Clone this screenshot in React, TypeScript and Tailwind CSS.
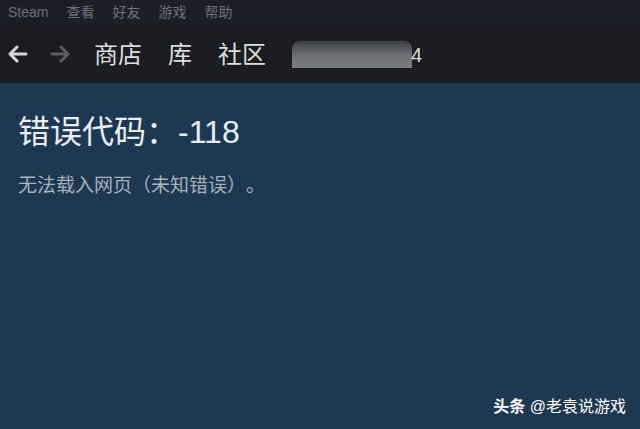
import React from "react";

const font = "font-['Liberation_Sans','Noto_Sans_CJK_SC',sans-serif]";

const BackArrow = ({ color }: { color: string }) => (
  <svg width="20" height="18" viewBox="0 0 20 18" fill="none" stroke={color} strokeWidth="3" strokeLinecap="round" strokeLinejoin="round">
    <path d="M18 9H3M9 2L2 9l7 7" />
  </svg>
);

const ForwardArrow = ({ color }: { color: string }) => (
  <svg width="20" height="18" viewBox="0 0 20 18" fill="none" stroke={color} strokeWidth="3" strokeLinecap="round" strokeLinejoin="round">
    <path d="M2 9h15M11 2l7 7-7 7" />
  </svg>
);

const App = () => {
  return (
    <div className={`w-[640px] h-[429px] flex flex-col bg-[#1d3850] ${font}`}>
      {/* menu bar */}
      <div className="h-[26px] flex items-center gap-[18px] pl-[8px] pb-[2px] bg-[#1c1f27] text-[14px] text-[#6c717b]">
        <span>Steam</span>
        <span>查看</span>
        <span>好友</span>
        <span>游戏</span>
        <span>帮助</span>
      </div>
      {/* nav bar */}
      <div className="h-[57px] flex items-center bg-[#1b1d23] border-b-2 border-[#18191e] pl-[8px]">
        <BackArrow color="#d6d7d9" />
        <div className="ml-[22px]">
          <ForwardArrow color="#595d64" />
        </div>
        <div className="ml-[24px] flex items-center gap-[26px] text-[24px] leading-[30px] text-[#dcdedf] pt-[2px]">
          <span>商店</span>
          <span>库</span>
          <span>社区</span>
          <div className="flex items-center">
            <div className="w-[120px] h-[27px] rounded-t-[8px] bg-gradient-to-b from-[#3c3f45] via-[#6a6d72] to-[#7a7d82]" />
            <span className="text-[20px] -ml-[1px]">4</span>
          </div>
        </div>
      </div>
      {/* content */}
      <div className="flex-1 flex flex-col px-[18px] pt-[29px] relative">
        <div className="text-[32px] leading-[40px] text-[#e9eef3]">错误代码：-118</div>
        <div className="mt-[22px] text-[19px] leading-[24px] text-[#a7b2bd] [text-spacing-trim:space-all]">
          无法载入网页（未知错误）。
        </div>
        <div className="absolute right-[14px] bottom-[10px] text-[16px] text-white">
          <span className="font-bold">头条</span> @老袁说游戏
        </div>
      </div>
    </div>
  );
};

export default App;
